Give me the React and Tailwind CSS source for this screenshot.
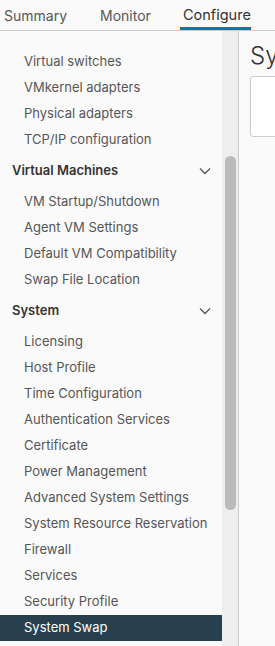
import React from "react";

const font = { fontFamily: "Inter, 'Noto Sans', sans-serif" };

function Chevron() {
  return (
    <svg width="12" height="8" viewBox="0 0 12 8" className="text-[#565656]">
      <path d="M1 1.5 L6 6.5 L11 1.5" fill="none" stroke="currentColor" strokeWidth="1.3" />
    </svg>
  );
}

function Item({ children, selected }) {
  return (
    <div
      className={
        "h-[26px] flex items-center pl-6 text-[13px] " +
        (selected ? "bg-[#28404d] text-white" : "text-[#565656]")
      }
    >
      {children}
    </div>
  );
}

function Header({ children }) {
  return (
    <div className="h-9 flex items-center justify-between pl-3 pr-[11px] text-[13px] font-semibold text-[#333]">
      <span>{children}</span>
      <Chevron />
    </div>
  );
}

export default function App() {
  return (
    <div className="w-[275px] h-[646px] overflow-hidden bg-[#fafafa] flex flex-col" style={font}>
      <div className="h-[31px] shrink-0 flex items-end border-b border-[#ccc] text-[14px]">
        <div className="pl-[4px] w-[96px] h-full flex items-center text-[#565656]">Summary</div>
        <div className="w-[84px] h-full flex items-center pl-[4px] text-[#565656]">Monitor</div>
        <div className="w-[71px] h-full flex items-center pl-[3px] border-b-[3px] border-[#0079b8] text-[#333] pt-[3px] text-[14.5px]">Configure</div>
      </div>
      <div className="flex flex-1 min-h-0">
        <div className="w-[222px] shrink-0 pt-[18px] bg-[#fafafa]">
          <Item>Virtual switches</Item>
          <Item>VMkernel adapters</Item>
          <Item>Physical adapters</Item>
          <Item>TCP/IP configuration</Item>
          <Header>Virtual Machines</Header>
          <Item>VM Startup/Shutdown</Item>
          <Item>Agent VM Settings</Item>
          <Item>Default VM Compatibility</Item>
          <Item>Swap File Location</Item>
          <Header>System</Header>
          <Item>Licensing</Item>
          <Item>Host Profile</Item>
          <Item>Time Configuration</Item>
          <Item>Authentication Services</Item>
          <Item>Certificate</Item>
          <Item>Power Management</Item>
          <Item>Advanced System Settings</Item>
          <Item>System Resource Reservation</Item>
          <Item>Firewall</Item>
          <Item>Services</Item>
          <Item>Security Profile</Item>
          <Item selected>System Swap</Item>
        </div>
        <div className="w-[17px] shrink-0 bg-[#eeeeee] border-r border-[#cccccc] pt-[125px] pl-[3px]">
          <div className="w-[11px] h-[354px] rounded-full bg-[#bbbbbb]" />
        </div>
        <div className="flex-1 min-w-0 overflow-hidden pl-[11px] pt-[11px]">
          <div className="text-[24px] leading-[28px] text-[#333] font-light whitespace-nowrap">System Swap</div>
          <div className="mt-[6px] h-[61px] w-[100px] border border-[#ccc] rounded-[3px] bg-white" />
        </div>
      </div>
    </div>
  );
}
